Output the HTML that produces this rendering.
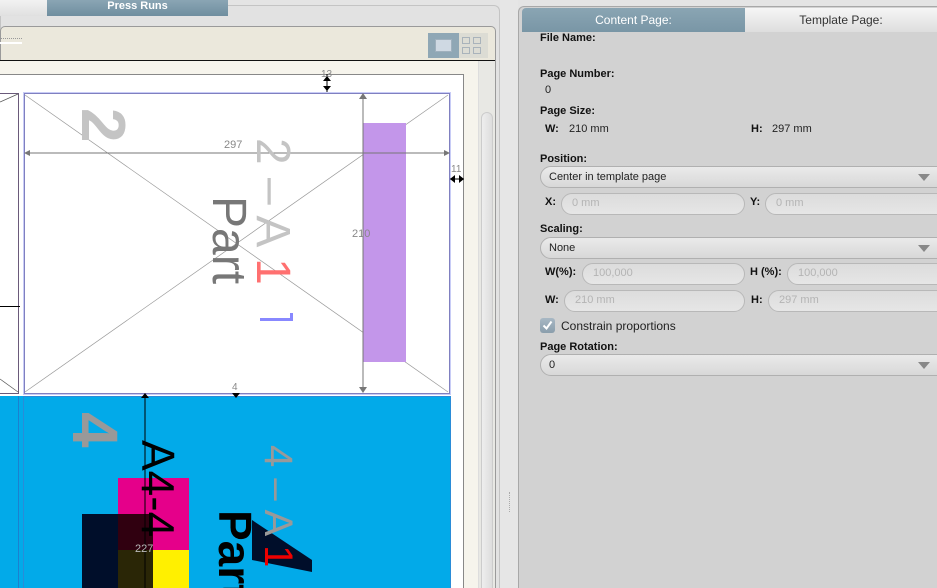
<!DOCTYPE html>
<html style="width:937px;height:588px;overflow:hidden"><head><meta charset="utf-8"><style>
*{margin:0;padding:0;box-sizing:border-box}
body{width:937px;height:588px;overflow:hidden;background:#e4e4e4;font-family:"Liberation Sans",sans-serif;position:relative}
.a{position:absolute}
.lbl{position:absolute;font-size:11px;font-weight:bold;color:#111}
.val{position:absolute;font-size:11px;color:#222}
.inp{position:absolute;height:22px;border:1px solid #b8b8b8;border-radius:11px;background:linear-gradient(#dcdcdc,#e6e6e6);font-size:11px;color:#b4b4b4;padding:1px 0 0 10px;line-height:16px}
.dd{position:absolute;left:540px;width:420px;height:22px;border:1px solid #b0b0b0;border-radius:11px;background:linear-gradient(#eaeaea,#d8d8d8);font-size:11px;color:#222;padding-left:8px;line-height:20px}
.tri{position:absolute;right:29px;top:7px;width:0;height:0;border-left:6px solid transparent;border-right:6px solid transparent;border-top:7px solid #888}
.rot{position:absolute;transform-origin:0 0;transform:rotate(90deg);white-space:nowrap}
</style></head><body>
<div class="a" style="left:0;top:0;width:937px;height:588px;overflow:hidden">
<div class="a" style="left:0;top:5px;width:500px;height:583px;border:1px solid #c4c4c4;border-bottom:none;border-radius:6px 6px 0 0;background:#e2e2e2"></div>
<div class="a" style="left:0;top:0;width:47px;height:16px;background:linear-gradient(#f2f2f2,#e0e0e0)"></div>
<div class="a" style="left:47px;top:0;width:181px;height:16px;background:linear-gradient(#8aa5b4,#6f8e9f);color:#fff;font-weight:bold;font-size:11px;text-align:center;line-height:13px">Press Runs</div>
<div class="a" style="left:0;top:26px;width:496px;height:562px;border:1px solid #9a9a9a;border-bottom:none;border-radius:5px 5px 0 0;background:#ebe8dc"></div>
<div class="a" style="left:0;top:38px;width:22px;height:5px;border-top:1px dotted #999"></div>
<div class="a" style="left:0;top:42px;width:22px;height:2px;background:#fff"></div>
<div class="a" style="left:428px;top:33px;width:60px;height:25px;background:#dcdcd4"></div>
<div class="a" style="left:428px;top:33px;width:31px;height:25px;background:#8fa7b5"></div>
<div class="a" style="left:435px;top:39px;width:17px;height:13px;background:#cfd9e3;border:1px solid #9fb0bd"></div>
<div class="a" style="left:462px;top:37px;width:8px;height:7px;border:1px solid #a9b3bb"></div>
<div class="a" style="left:473px;top:37px;width:8px;height:7px;border:1px solid #a9b3bb"></div>
<div class="a" style="left:462px;top:47px;width:8px;height:7px;border:1px solid #a9b3bb"></div>
<div class="a" style="left:473px;top:47px;width:8px;height:7px;border:1px solid #a9b3bb"></div>
<div class="a" style="left:0;top:60px;width:495px;height:1px;background:#111"></div>
<div class="a" style="left:0;top:61px;width:478px;height:527px;background:#f6f4ec"></div>
<div class="a" style="left:478px;top:61px;width:17px;height:527px;background:#e8e8e4;border-left:1px solid #ddd"></div>
<div class="a" style="left:481px;top:112px;width:12px;height:490px;border:1px solid #ccc;border-radius:6px;background:linear-gradient(90deg,#eee,#ddd)"></div>
<div class="a" style="left:-1px;top:74px;width:465px;height:520px;border:1px solid #888;background:#fff"></div>
<div class="a" style="left:0;top:93px;width:19px;height:301px;border:1px solid #6a5a7a;border-left:none;background:#fff"></div>
<div class="a" style="left:0;top:306px;width:20px;height:1px;background:#000"></div>
<div class="a" style="left:23px;top:92px;width:428px;height:303px;border:2px solid #c8ccf6;background:#fff"></div>
<div class="a" style="left:24px;top:93px;width:426px;height:301px;border:1px solid #8080c0"></div>
<svg class="a" style="left:0;top:0" width="500" height="588">
<line x1="25" y1="95" x2="448" y2="392" stroke="#999" stroke-width=".7"/>
<line x1="448" y1="95" x2="25" y2="392" stroke="#999" stroke-width=".7"/>
<line x1="0" y1="102" x2="18" y2="94" stroke="#555" stroke-width=".7"/>
<line x1="0" y1="379" x2="18" y2="392" stroke="#555" stroke-width=".7"/>
<rect x="363" y="123" width="43" height="239" fill="#c396ea"/>
<line x1="26" y1="153" x2="448" y2="153" stroke="#777"/>
<polygon points="24,153 30,150 30,156" fill="#777"/><polygon points="450,153 444,150 444,156" fill="#777"/>
<line x1="363" y1="94" x2="363" y2="392" stroke="#777"/>
<polygon points="363,93 359,99 367,99" fill="#777"/><polygon points="363,393 359,387 367,387" fill="#777"/>
<line x1="327" y1="74" x2="327" y2="92" stroke="#000"/>
<polygon points="327,76 323,81 331,81" fill="#000"/><polygon points="327,91 323,86 331,86" fill="#000"/>
<line x1="450" y1="179" x2="464" y2="179" stroke="#000"/>
<polygon points="450,179 455,175 455,183" fill="#000"/><polygon points="464,179 459,175 459,183" fill="#000"/>
<text x="224" y="148" font-size="11" fill="#888" font-family="Liberation Sans">297</text>
<text x="352" y="237" font-size="11" fill="#888" font-family="Liberation Sans">210</text>
<text x="321" y="77" font-size="10" fill="#888" font-family="Liberation Sans">13</text>
<text x="451" y="172" font-size="10" fill="#888" font-family="Liberation Sans">11</text>
<text x="232" y="390" font-size="10" fill="#888" font-family="Liberation Sans">4</text>
</svg>
<div class="rot" style="left:138px;top:108px;font-size:62px;color:#c4c4c4;font-weight:bold">2</div>
<div class="rot" style="left:300px;top:138px;font-size:48px;color:#c4c4c4">2 – A <span style="color:#ff7070">1</span></div>
<div class="rot" style="left:256px;top:196px;font-size:48px;color:#777">Part</div>
<div class="a" style="left:260px;top:313px;width:33px;height:8px;border-bottom:3px solid #8888ff;border-right:3px solid #8888ff"></div>
<div class="a" style="left:0;top:396px;width:451px;height:192px;background:#02aae9"></div>
<div class="a" style="left:0;top:396px;width:19px;height:192px;border-right:1px solid #1b80d0"></div>
<div class="a" style="left:23px;top:396px;width:428px;height:192px;border:1px solid #2a8cd8;border-bottom:none"></div>
<div class="a" style="left:118px;top:478px;width:71px;height:72px;background:#e5008a"></div>
<div class="a" style="left:118px;top:550px;width:71px;height:38px;background:#fff000"></div>
<div class="a" style="left:82px;top:514px;width:71px;height:74px;background:#000e2a"></div>
<div class="a" style="left:118px;top:514px;width:35px;height:36px;background:#300010"></div>
<div class="a" style="left:118px;top:550px;width:35px;height:38px;background:#2a2606"></div>
<svg class="a" style="left:0;top:0" width="500" height="588">
<line x1="145" y1="396" x2="145" y2="588" stroke="#000"/>
<polygon points="145,393 141,398 149,398" fill="#000"/>
<polygon points="232,393 240,393 236,398" fill="#000"/>
<polygon points="252,520 312,560 312,572 252,560" fill="#000e2a"/>
</svg>
<div class="rot" style="left:185px;top:440px;font-size:46px;color:#000">A4-4</div>
<div class="rot" style="left:132px;top:412px;font-size:64px;color:#999;font-weight:bold">4</div>
<div class="rot" style="left:300px;top:445px;font-size:40px;color:#999">4 – A <span style="color:#e00">1</span></div>
<div class="rot" style="left:262px;top:510px;font-size:46px;color:#000;font-weight:bold">Part</div>
<div class="a" style="left:135px;top:543px;font-size:11px;color:#bbb">227</div>
<div class="a" style="left:500px;top:0;width:18px;height:588px;background:#e6e6e6"></div>
<div class="a" style="left:509px;top:492px;width:2px;height:20px;border-left:1px dotted #aaa"></div>
<div class="a" style="left:518px;top:6px;width:430px;height:582px;background:#d2d2d2;border:1px solid #a8a8a8;border-bottom:none;border-radius:6px 6px 0 0"></div>
<div class="a" style="left:522px;top:8px;width:223px;height:24px;background:linear-gradient(#8aa5b3,#7996a6);border-radius:4px 0 0 0;color:#fff;font-size:12px;text-align:center;line-height:24px">Content Page:</div>
<div class="a" style="left:745px;top:8px;width:192px;height:24px;background:linear-gradient(#f6f6f6,#dedede);color:#333;font-size:12px;text-align:center;line-height:24px">Template Page:</div>
<div class="lbl" style="left:540px;top:32px">File Name:</div>
<div class="lbl" style="left:540px;top:68px">Page Number:</div>
<div class="val" style="left:545px;top:84px">0</div>
<div class="lbl" style="left:540px;top:105px">Page Size:</div>
<div class="lbl" style="left:545px;top:123px">W:</div><div class="val" style="left:569px;top:123px">210 mm</div>
<div class="lbl" style="left:751px;top:123px">H:</div><div class="val" style="left:772px;top:123px">297 mm</div>
<div class="lbl" style="left:540px;top:153px">Position:</div>
<div class="dd" style="top:166px">Center in template page<div class="tri"></div></div>
<div class="lbl" style="left:545px;top:196px">X:</div>
<div class="inp" style="left:561px;top:193px;width:184px">0 mm</div>
<div class="lbl" style="left:750px;top:196px">Y:</div>
<div class="inp" style="left:765px;top:193px;width:200px">0 mm</div>
<div class="lbl" style="left:540px;top:223px">Scaling:</div>
<div class="dd" style="top:237px">None<div class="tri"></div></div>
<div class="lbl" style="left:545px;top:266px">W(%):</div>
<div class="inp" style="left:582px;top:263px;width:163px">100,000</div>
<div class="lbl" style="left:750px;top:266px">H (%):</div>
<div class="inp" style="left:787px;top:263px;width:180px">100,000</div>
<div class="lbl" style="left:545px;top:294px">W:</div>
<div class="inp" style="left:564px;top:290px;width:181px">210 mm</div>
<div class="lbl" style="left:751px;top:294px">H:</div>
<div class="inp" style="left:768px;top:290px;width:200px">297 mm</div>
<div class="a" style="left:540px;top:318px;width:15px;height:15px;border-radius:3px;background:linear-gradient(#a8b8c4,#8a9eac)"></div>
<svg class="a" style="left:540px;top:318px" width="15" height="15"><path d="M3.5 7.5 L6.5 10.5 L11.5 3.5" stroke="#fff" stroke-width="2" fill="none"/></svg>
<div class="val" style="left:561px;top:319px;font-size:12px">Constrain proportions</div>
<div class="lbl" style="left:540px;top:341px">Page Rotation:</div>
<div class="dd" style="top:354px">0<div class="tri"></div></div>
</div>
</body></html>
